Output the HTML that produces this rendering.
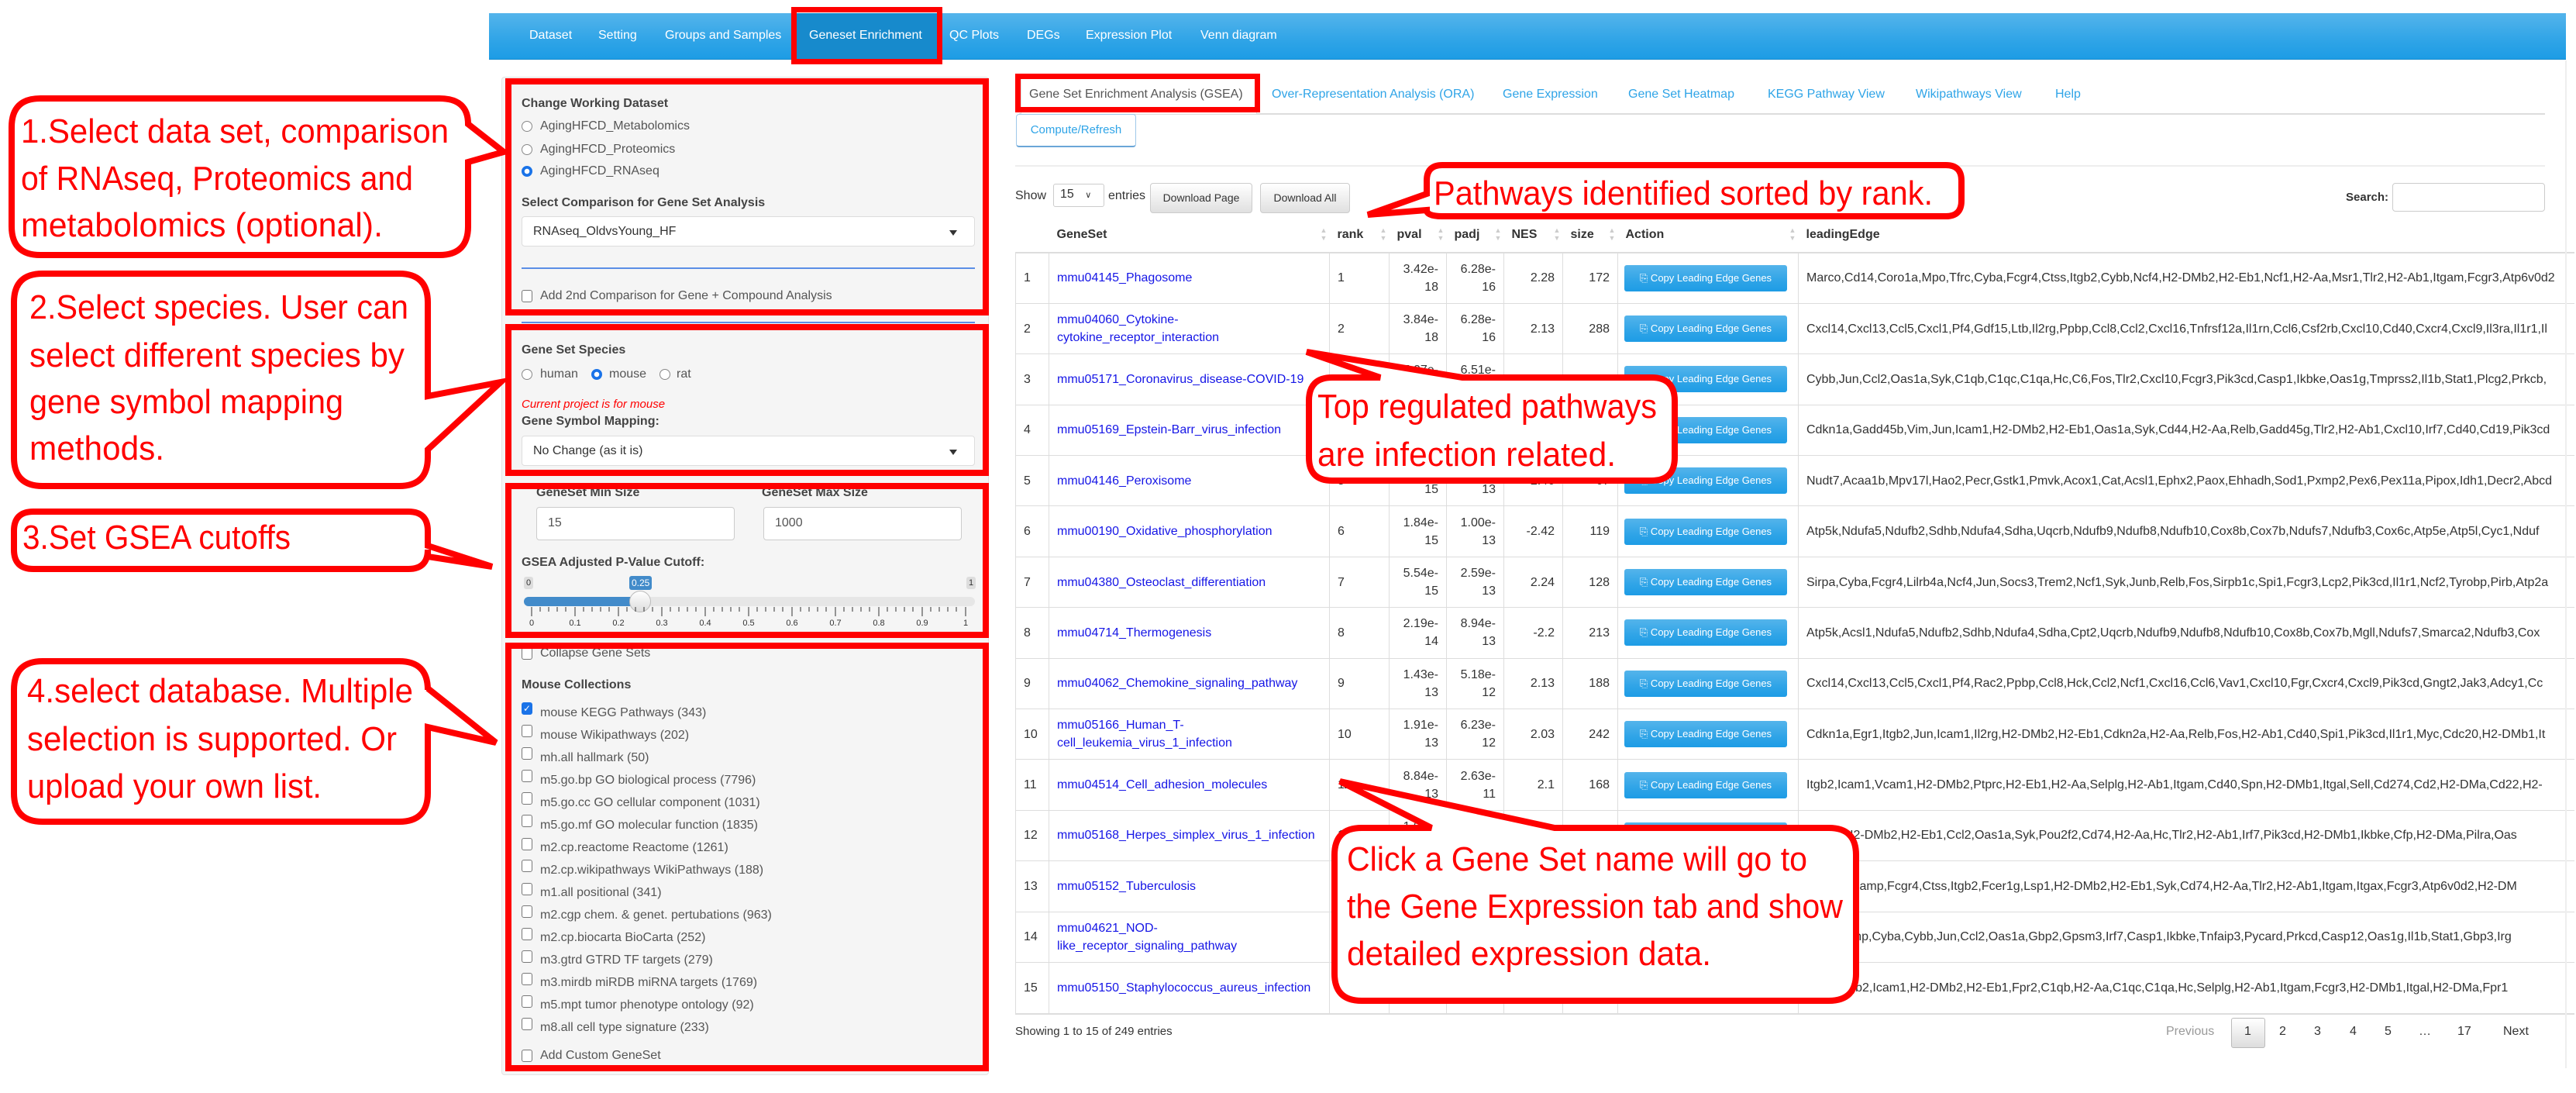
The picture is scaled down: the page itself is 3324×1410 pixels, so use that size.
<!DOCTYPE html>
<html><head><meta charset="utf-8">
<style>
*{box-sizing:border-box;margin:0;padding:0}
body{width:3324px;height:1410px;background:#fff;position:relative;overflow:hidden;font-family:"Liberation Sans",Arial,sans-serif;color:#555;font-size:16px}
.a{position:absolute;white-space:nowrap}
.nav{position:absolute;left:631px;top:17px;width:2680px;height:60px;background:linear-gradient(#54b4eb,#2fa4e7 60%,#1d9ce5);border-bottom:1px solid #178acc}
.nav span{position:absolute;top:20px;color:#fff;font-size:16px}
.act{position:absolute;left:1026px;top:17px;width:183px;height:60px;background:#178acc}
.side{position:absolute;left:647px;top:99px;width:629px;height:1288px;background:#f5f5f5;border:1px solid #e3e3e3;border-radius:4px}
.lbl{font-weight:bold;color:#444;font-size:16px}
.rad{position:absolute;width:14px;height:14px;border:1px solid #888;border-radius:50%;background:#fff}
.rad.on{border:1px solid #1a73e8;background:radial-gradient(#fff 0 3px,#1a73e8 3.5px)}
.chk{position:absolute;width:14px;height:16px;border:1px solid #777;border-radius:3px;background:#fff}
.sel{position:absolute;background:#fff;border:1px solid #ddd;border-radius:4px;font-size:16px;color:#333;padding:10px 14px}
.sel:after{content:"";position:absolute;right:22px;top:17px;border:5px solid transparent;border-top:7px solid #333}
.inp{position:absolute;background:#fff;border:1px solid #ccc;border-radius:4px;font-size:16px;color:#555;padding:11px 14px}
.tab{position:absolute;top:113px;color:#2fa4e7;font-size:16px}
.btn{position:absolute;background:linear-gradient(#fff,#e0e0e0);border:1px solid #ccc;border-radius:4px;font-size:14px;color:#333;text-align:center}
table{border-collapse:collapse;table-layout:fixed;font-size:16px;color:#333}
td,th{padding:0 10px;overflow:hidden;white-space:nowrap;line-height:23px}
th{text-align:left;height:46px;border-bottom:2px solid #ddd;font-weight:bold;position:relative}
th .s{position:absolute;right:4px;top:12px;width:8px;height:22px;color:#ccc;font-size:9px;line-height:10px}
td{border-top:1px solid #ddd;border-left:1px solid #ddd}
tbody tr{height:65.4px}
td.r{text-align:right}
td a{color:#1515e6;text-decoration:none}
.cb{display:inline-block;width:210px;height:34px;line-height:34px;border-radius:3px;background:linear-gradient(#54b4eb,#2fa4e7 60%,#1d9ce5);color:#fff;font-size:13px;text-align:center;margin-left:-2px}
.pg{position:absolute;top:1322px;font-size:16px;color:#333}
</style></head><body>

<div class="nav"></div>
<div class="act"></div>
<div class="nav" style="background:none;border:none">
<span style="left:52px">Dataset</span><span style="left:141px">Setting</span><span style="left:227px">Groups and Samples</span><span style="left:413px">Geneset Enrichment</span><span style="left:594px">QC Plots</span><span style="left:694px">DEGs</span><span style="left:770px">Expression Plot</span><span style="left:918px">Venn diagram</span>
</div>
<div class="a" style="left:1021px;top:9px;width:195px;height:74px;border:7px solid #f00"></div>

<!-- sidebar -->
<div class="side"></div>
<div class="a lbl" style="left:673px;top:125px">Change Working Dataset</div>
<div class="rad" style="left:673px;top:156px"></div><div class="a" style="left:697px;top:154px">AgingHFCD_Metabolomics</div>
<div class="rad" style="left:673px;top:186px"></div><div class="a" style="left:697px;top:184px">AgingHFCD_Proteomics</div>
<div class="rad on" style="left:673px;top:214px"></div><div class="a" style="left:697px;top:212px">AgingHFCD_RNAseq</div>
<div class="a lbl" style="left:673px;top:253px">Select Comparison for Gene Set Analysis</div>
<div class="sel" style="left:673px;top:279px;width:585px;height:39px">RNAseq_OldvsYoung_HF</div>
<div class="a" style="left:673px;top:345px;width:585px;height:2px;background:#5b8ee6"></div>
<div class="chk" style="left:673px;top:374px"></div><div class="a" style="left:697px;top:373px">Add 2nd Comparison for Gene + Compound Analysis</div>
<div class="a" style="left:673px;top:415px;width:585px;height:2px;background:#5b8ee6"></div>
<div class="a lbl" style="left:673px;top:443px">Gene Set Species</div>
<div class="rad" style="left:673px;top:476px"></div><div class="a" style="left:697px;top:474px">human</div>
<div class="rad on" style="left:763px;top:476px"></div><div class="a" style="left:786px;top:474px">mouse</div>
<div class="rad" style="left:851px;top:476px"></div><div class="a" style="left:873px;top:474px">rat</div>
<div class="a" style="left:673px;top:513px;color:#f00;font-style:italic;font-size:15px">Current project is for mouse</div>
<div class="a lbl" style="left:673px;top:535px">Gene Symbol Mapping:</div>
<div class="sel" style="left:673px;top:562px;width:585px;height:39px">No Change (as it is)</div>
<div class="a lbl" style="left:692px;top:627px">GeneSet Min Size</div>
<div class="a lbl" style="left:983px;top:627px">GeneSet Max Size</div>
<div class="inp" style="left:692px;top:654px;width:256px;height:43px">15</div>
<div class="inp" style="left:985px;top:654px;width:256px;height:43px">1000</div>
<div class="a lbl" style="left:673px;top:717px">GSEA Adjusted P-Value Cutoff:</div>
<div class="a" style="left:676px;top:744px;background:#ddd;color:#333;font-size:11px;padding:2px 3px;border-radius:3px">0</div>
<div class="a" style="left:812px;top:743px;background:#428bca;color:#fff;font-size:12px;padding:2px 3px;border-radius:3px">0.25</div>
<div class="a" style="left:1247px;top:744px;background:#ddd;color:#333;font-size:11px;padding:2px 3px;border-radius:3px">1</div>
<div class="a" style="left:676px;top:770px;width:582px;height:12px;background:#e6e6e6;border-radius:6px"></div>
<div class="a" style="left:676px;top:770px;width:150px;height:12px;background:#428bca;border-radius:6px 0 0 6px"></div>
<div class="a" style="left:812px;top:762px;width:28px;height:28px;border-radius:50%;background:linear-gradient(#fff,#ddd);border:1px solid #bbb"></div>
<svg class="a" style="left:676px;top:783px" width="590" height="40">
<g stroke="#333" stroke-width="1">
<path d="M10 0v12M66 0v12M122 0v12M178 0v12M234 0v12M290 0v12M346 0v12M402 0v12M458 0v12M514 0v12M570 0v12"/>
<path d="M21 0v6M32 0v6M43 0v6M54 0v6M77 0v6M88 0v6M99 0v6M110 0v6M133 0v6M144 0v6M155 0v6M166 0v6M189 0v6M200 0v6M211 0v6M222 0v6M245 0v6M256 0v6M267 0v6M278 0v6M301 0v6M312 0v6M323 0v6M334 0v6M357 0v6M368 0v6M379 0v6M390 0v6M413 0v6M424 0v6M435 0v6M446 0v6M469 0v6M480 0v6M491 0v6M502 0v6M525 0v6M536 0v6M547 0v6M558 0v6"/>
</g>
<g font-size="11" fill="#333" text-anchor="middle" font-family="Liberation Sans"><text x="10" y="24">0</text><text x="66" y="24">0.1</text><text x="122" y="24">0.2</text><text x="178" y="24">0.3</text><text x="234" y="24">0.4</text><text x="290" y="24">0.5</text><text x="346" y="24">0.6</text><text x="402" y="24">0.7</text><text x="458" y="24">0.8</text><text x="514" y="24">0.9</text><text x="570" y="24">1</text></g>
</svg>
<div class="chk" style="left:673px;top:835px"></div><div class="a" style="left:697px;top:834px">Collapse Gene Sets</div>
<div class="a lbl" style="left:673px;top:875px">Mouse Collections</div>
<div class="chk" style="left:673px;top:906px;background:#1a73e8;border-color:#1a73e8;color:#fff;font-size:12px;line-height:14px;text-align:center">✓</div>
<div class="a" style="left:697px;top:905px;line-height:29px">mouse KEGG Pathways (343)<br>mouse Wikipathways (202)<br>mh.all hallmark (50)<br>m5.go.bp GO biological process (7796)<br>m5.go.cc GO cellular component (1031)<br>m5.go.mf GO molecular function (1835)<br>m2.cp.reactome Reactome (1261)<br>m2.cp.wikipathways WikiPathways (188)<br>m1.all positional (341)<br>m2.cgp chem. &amp; genet. pertubations (963)<br>m2.cp.biocarta BioCarta (252)<br>m3.gtrd GTRD TF targets (279)<br>m3.mirdb miRDB miRNA targets (1769)<br>m5.mpt tumor phenotype ontology (92)<br>m8.all cell type signature (233)</div>
<div class="chk" style="left:673px;top:935px"></div><div class="chk" style="left:673px;top:964px"></div><div class="chk" style="left:673px;top:993px"></div><div class="chk" style="left:673px;top:1022px"></div><div class="chk" style="left:673px;top:1051px"></div><div class="chk" style="left:673px;top:1081px"></div><div class="chk" style="left:673px;top:1109px"></div><div class="chk" style="left:673px;top:1139px"></div><div class="chk" style="left:673px;top:1168px"></div><div class="chk" style="left:673px;top:1197px"></div><div class="chk" style="left:673px;top:1226px"></div><div class="chk" style="left:673px;top:1255px"></div><div class="chk" style="left:673px;top:1284px"></div><div class="chk" style="left:673px;top:1313px"></div>
<div class="chk" style="left:673px;top:1354px"></div><div class="a" style="left:697px;top:1353px">Add Custom GeneSet</div>

<!-- sidebar red boxes -->
<div class="a" style="left:652px;top:101px;width:624px;height:306px;border:8px solid #f00"></div>
<div class="a" style="left:652px;top:418px;width:624px;height:196px;border:8px solid #f00"></div>
<div class="a" style="left:652px;top:623px;width:624px;height:200px;border:8px solid #f00"></div>
<div class="a" style="left:652px;top:829px;width:624px;height:553px;border:8px solid #f00"></div>

<!-- main tabs -->
<div class="a" style="left:1315px;top:146px;width:1969px;height:2px;background:#ddd"></div>
<div class="a" style="left:1317px;top:100px;width:305px;height:47px;background:#fff;border:1px solid #ddd;border-bottom:none"></div>
<div class="tab" style="left:1328px;color:#555">Gene Set Enrichment Analysis (GSEA)</div>
<div class="tab" style="left:1641px">Over-Representation Analysis (ORA)</div>
<div class="tab" style="left:1939px">Gene Expression</div>
<div class="tab" style="left:2101px">Gene Set Heatmap</div>
<div class="tab" style="left:2281px">KEGG Pathway View</div>
<div class="tab" style="left:2472px">Wikipathways View</div>
<div class="tab" style="left:2652px">Help</div>
<div class="a" style="left:1310px;top:95px;width:316px;height:50px;border:7px solid #f00"></div>
<div class="a" style="left:1311px;top:147px;width:155px;height:43px;border:1px solid #9fc8ea;border-bottom:2px solid #6aa6d8;border-radius:4px;color:#2fa4e7;font-size:15px;line-height:40px;text-align:center">Compute/Refresh</div>
<div class="a" style="left:1310px;top:213px;width:1974px;height:2px;background:#eee"></div>

<div class="a" style="left:1310px;top:244px;font-size:16px;color:#333">Show</div>
<div class="a" style="left:1359px;top:237px;width:66px;height:30px;border:1px solid #ccc;border-radius:3px;background:#fff;font-size:16px;color:#333;padding:4px 8px">15 <span style="font-size:11px;margin-left:10px">∨</span></div>
<div class="a" style="left:1430px;top:244px;font-size:16px;color:#333">entries</div>
<div class="btn" style="left:1484px;top:236px;width:132px;height:39px;line-height:37px">Download Page</div>
<div class="btn" style="left:1626px;top:236px;width:116px;height:39px;line-height:37px">Download All</div>
<div class="a" style="left:3027px;top:246px;font-size:15px;font-weight:bold;color:#333">Search:</div>
<div class="a" style="left:3087px;top:236px;width:197px;height:37px;border:1px solid #ccc;border-radius:4px;background:#fff"></div>

<div class="a" style="left:1310px;top:280px;width:2012px;height:1040px;overflow:hidden">
<table style="width:2400px">
<colgroup><col style="width:43px"><col style="width:362px"><col style="width:77px"><col style="width:74px"><col style="width:74px"><col style="width:76px"><col style="width:71px"><col style="width:233px"><col style="width:1390px"></colgroup>
<thead><tr><th></th><th>GeneSet<span class="s">▲<br>▼</span></th><th>rank<span class="s">▲<br>▼</span></th><th>pval<span class="s">▲<br>▼</span></th><th>padj<span class="s">▲<br>▼</span></th><th>NES<span class="s">▲<br>▼</span></th><th>size<span class="s">▲<br>▼</span></th><th>Action<span class="s">▲<br>▼</span></th><th>leadingEdge</th></tr></thead>
<tbody>
<tr><td>1</td><td><a>mmu04145_Phagosome</a></td><td>1</td><td class="r">3.42e-<br>18</td><td class="r">6.28e-<br>16</td><td class="r">2.28</td><td class="r">172</td><td><span class="cb">⎘ Copy Leading Edge Genes</span></td><td>Marco,Cd14,Coro1a,Mpo,Tfrc,Cyba,Fcgr4,Ctss,Itgb2,Cybb,Ncf4,H2-DMb2,H2-Eb1,Ncf1,H2-Aa,Msr1,Tlr2,H2-Ab1,Itgam,Fcgr3,Atp6v0d2</td></tr>
<tr><td>2</td><td><a>mmu04060_Cytokine-<br>cytokine_receptor_interaction</a></td><td>2</td><td class="r">3.84e-<br>18</td><td class="r">6.28e-<br>16</td><td class="r">2.13</td><td class="r">288</td><td><span class="cb">⎘ Copy Leading Edge Genes</span></td><td>Cxcl14,Cxcl13,Ccl5,Cxcl1,Pf4,Gdf15,Ltb,Il2rg,Ppbp,Ccl8,Ccl2,Cxcl16,Tnfrsf12a,Il1rn,Ccl6,Csf2rb,Cxcl10,Cd40,Cxcr4,Cxcl9,Il3ra,Il1r1,Il</td></tr>
<tr><td>3</td><td><a>mmu05171_Coronavirus_disease-COVID-19</a></td><td>3</td><td class="r">5.07e-<br>17</td><td class="r">6.51e-<br>15</td><td class="r">2.01</td><td class="r">228</td><td><span class="cb">⎘ Copy Leading Edge Genes</span></td><td>Cybb,Jun,Ccl2,Oas1a,Syk,C1qb,C1qc,C1qa,Hc,C6,Fos,Tlr2,Cxcl10,Fcgr3,Pik3cd,Casp1,Ikbke,Oas1g,Tmprss2,Il1b,Stat1,Plcg2,Prkcb,</td></tr>
<tr><td>4</td><td><a>mmu05169_Epstein-Barr_virus_infection</a></td><td>4</td><td class="r">2.17e-<br>16</td><td class="r">2.09e-<br>14</td><td class="r">2.02</td><td class="r">222</td><td><span class="cb">⎘ Copy Leading Edge Genes</span></td><td>Cdkn1a,Gadd45b,Vim,Jun,Icam1,H2-DMb2,H2-Eb1,Oas1a,Syk,Cd44,H2-Aa,Relb,Gadd45g,Tlr2,H2-Ab1,Cxcl10,Irf7,Cd40,Cd19,Pik3cd</td></tr>
<tr><td>5</td><td><a>mmu04146_Peroxisome</a></td><td>5</td><td class="r">1.06e-<br>15</td><td class="r">8.17e-<br>13</td><td class="r">-2.46</td><td class="r">67</td><td><span class="cb">⎘ Copy Leading Edge Genes</span></td><td>Nudt7,Acaa1b,Mpv17l,Hao2,Pecr,Gstk1,Pmvk,Acox1,Cat,Acsl1,Ephx2,Paox,Ehhadh,Sod1,Pxmp2,Pex6,Pex11a,Pipox,Idh1,Decr2,Abcd</td></tr>
<tr><td>6</td><td><a>mmu00190_Oxidative_phosphorylation</a></td><td>6</td><td class="r">1.84e-<br>15</td><td class="r">1.00e-<br>13</td><td class="r">-2.42</td><td class="r">119</td><td><span class="cb">⎘ Copy Leading Edge Genes</span></td><td>Atp5k,Ndufa5,Ndufb2,Sdhb,Ndufa4,Sdha,Uqcrb,Ndufb9,Ndufb8,Ndufb10,Cox8b,Cox7b,Ndufs7,Ndufb3,Cox6c,Atp5e,Atp5l,Cyc1,Nduf</td></tr>
<tr><td>7</td><td><a>mmu04380_Osteoclast_differentiation</a></td><td>7</td><td class="r">5.54e-<br>15</td><td class="r">2.59e-<br>13</td><td class="r">2.24</td><td class="r">128</td><td><span class="cb">⎘ Copy Leading Edge Genes</span></td><td>Sirpa,Cyba,Fcgr4,Lilrb4a,Ncf4,Jun,Socs3,Trem2,Ncf1,Syk,Junb,Relb,Fos,Sirpb1c,Spi1,Fcgr3,Lcp2,Pik3cd,Il1r1,Ncf2,Tyrobp,Pirb,Atp2a</td></tr>
<tr><td>8</td><td><a>mmu04714_Thermogenesis</a></td><td>8</td><td class="r">2.19e-<br>14</td><td class="r">8.94e-<br>13</td><td class="r">-2.2</td><td class="r">213</td><td><span class="cb">⎘ Copy Leading Edge Genes</span></td><td>Atp5k,Acsl1,Ndufa5,Ndufb2,Sdhb,Ndufa4,Sdha,Cpt2,Uqcrb,Ndufb9,Ndufb8,Ndufb10,Cox8b,Cox7b,Mgll,Ndufs7,Smarca2,Ndufb3,Cox</td></tr>
<tr><td>9</td><td><a>mmu04062_Chemokine_signaling_pathway</a></td><td>9</td><td class="r">1.43e-<br>13</td><td class="r">5.18e-<br>12</td><td class="r">2.13</td><td class="r">188</td><td><span class="cb">⎘ Copy Leading Edge Genes</span></td><td>Cxcl14,Cxcl13,Ccl5,Cxcl1,Pf4,Rac2,Ppbp,Ccl8,Hck,Ccl2,Ncf1,Cxcl16,Ccl6,Vav1,Cxcl10,Fgr,Cxcr4,Cxcl9,Pik3cd,Gngt2,Jak3,Adcy1,Cc</td></tr>
<tr><td>10</td><td><a>mmu05166_Human_T-<br>cell_leukemia_virus_1_infection</a></td><td>10</td><td class="r">1.91e-<br>13</td><td class="r">6.23e-<br>12</td><td class="r">2.03</td><td class="r">242</td><td><span class="cb">⎘ Copy Leading Edge Genes</span></td><td>Cdkn1a,Egr1,Itgb2,Jun,Icam1,Il2rg,H2-DMb2,H2-Eb1,Cdkn2a,H2-Aa,Relb,Fos,H2-Ab1,Cd40,Spi1,Pik3cd,Il1r1,Myc,Cdc20,H2-DMb1,It</td></tr>
<tr><td>11</td><td><a>mmu04514_Cell_adhesion_molecules</a></td><td>11</td><td class="r">8.84e-<br>13</td><td class="r">2.63e-<br>11</td><td class="r">2.1</td><td class="r">168</td><td><span class="cb">⎘ Copy Leading Edge Genes</span></td><td>Itgb2,Icam1,Vcam1,H2-DMb2,Ptprc,H2-Eb1,H2-Aa,Selplg,H2-Ab1,Itgam,Cd40,Spn,H2-DMb1,Itgal,Sell,Cd274,Cd2,H2-DMa,Cd22,H2-</td></tr>
<tr><td>12</td><td><a>mmu05168_Herpes_simplex_virus_1_infection</a></td><td>12</td><td class="r">1.01e-<br>12</td><td class="r">2.75e-<br>11</td><td class="r">1.98</td><td class="r">371</td><td><span class="cb">⎘ Copy Leading Edge Genes</span></td><td>Socs3,H2-DMb2,H2-Eb1,Ccl2,Oas1a,Syk,Pou2f2,Cd74,H2-Aa,Hc,Tlr2,H2-Ab1,Irf7,Pik3cd,H2-DMb1,Ikbke,Cfp,H2-DMa,Pilra,Oas</td></tr>
<tr><td>13</td><td><a>mmu05152_Tuberculosis</a></td><td>13</td><td class="r">1.48e-<br>12</td><td class="r">3.72e-<br>11</td><td class="r">2.05</td><td class="r">170</td><td><span class="cb">⎘ Copy Leading Edge Genes</span></td><td>Coro1a,Camp,Fcgr4,Ctss,Itgb2,Fcer1g,Lsp1,H2-DMb2,H2-Eb1,Syk,Cd74,H2-Aa,Tlr2,H2-Ab1,Itgam,Itgax,Fcgr3,Atp6v0d2,H2-DM</td></tr>
<tr><td>14</td><td><a>mmu04621_NOD-<br>like_receptor_signaling_pathway</a></td><td>14</td><td class="r">2.77e-<br>12</td><td class="r">6.40e-<br>11</td><td class="r">2.02</td><td class="r">184</td><td><span class="cb">⎘ Copy Leading Edge Genes</span></td><td>Ncf1,Camp,Cyba,Cybb,Jun,Ccl2,Oas1a,Gbp2,Gpsm3,Irf7,Casp1,Ikbke,Tnfaip3,Pycard,Prkcd,Casp12,Oas1g,Il1b,Stat1,Gbp3,Irg</td></tr>
<tr><td>15</td><td><a>mmu05150_Staphylococcus_aureus_infection</a></td><td>15</td><td class="r">4.02e-<br>12</td><td class="r">8.61e-<br>11</td><td class="r">2.12</td><td class="r">83</td><td><span class="cb">⎘ Copy Leading Edge Genes</span></td><td>Fcgr4,Itgb2,Icam1,H2-DMb2,H2-Eb1,Fpr2,C1qb,H2-Aa,C1qc,C1qa,Hc,Selplg,H2-Ab1,Itgam,Fcgr3,H2-DMb1,Itgal,H2-DMa,Fpr1</td></tr>
</tbody></table>
<div style="position:absolute;left:0;top:1027px;width:2012px;height:2px;background:#ddd"></div>
</div>

<div class="pg" style="left:1310px;font-size:15px">Showing 1 to 15 of 249 entries</div>
<div class="pg" style="left:2795px;color:#999">Previous</div>
<div class="a" style="left:2879px;top:1313px;width:44px;height:39px;border:1px solid #bbb;border-radius:3px;background:linear-gradient(#fff,#ddd)"></div>
<div class="pg" style="left:2896px">1</div><div class="pg" style="left:2941px">2</div><div class="pg" style="left:2986px">3</div><div class="pg" style="left:3032px">4</div><div class="pg" style="left:3077px">5</div><div class="pg" style="left:3121px">…</div><div class="pg" style="left:3171px">17</div><div class="pg" style="left:3230px">Next</div>
<div class="a" style="left:3310px;top:78px;width:2px;height:1300px;background:#eee"></div>

<!-- callouts -->
<svg class="a" style="left:0;top:0" width="3324" height="1410" font-family="Liberation Sans, Arial, sans-serif">
<g fill="#fff" stroke="#f00" stroke-width="8" stroke-linejoin="miter">
<path d="M52,127 H567 Q604,127 604,160 L650,196 L604,209 V292 Q604,329 567,329 H52 Q15,329 15,292 V164 Q15,127 52,127 Z"/>
<path d="M55,353 H515 Q552,353 552,390 V511 L646,493 L552,580 V590 Q552,627 515,627 H55 Q18,627 18,590 V390 Q18,353 55,353 Z"/>
<path d="M43,660 H527 Q552,660 552,685 V704 L635,731 L552,718 V709 Q552,734 527,734 H43 Q18,734 18,709 V685 Q18,660 43,660 Z"/>
<path d="M55,853 H515 Q552,853 552,890 V888 L640,958 L552,938 V1023 Q552,1060 515,1060 H55 Q18,1060 18,1023 V890 Q18,853 55,853 Z"/>
<path d="M1861,213 H2511 Q2531,213 2531,233 V259 Q2531,279 2511,279 H1861 Q1841,279 1841,271 L1765,277 L1841,250 V233 Q1841,213 1861,213 Z"/>
<path d="M1719,487 H1781 L1686,454 L1887,487 H2131 Q2161,487 2161,517 V590 Q2161,620 2131,620 H1719 Q1689,620 1689,590 V517 Q1689,487 1719,487 Z"/>
<path d="M1757,1068 H1847 L1729,1008 L2006,1068 H2360 Q2395,1068 2395,1103 V1256 Q2395,1291 2360,1291 H1757 Q1722,1291 1722,1256 V1103 Q1722,1068 1757,1068 Z"/>
</g>
<g fill="#f00" font-size="44" lengthAdjust="spacingAndGlyphs">
<text x="27" y="184" textLength="552" lengthAdjust="spacingAndGlyphs">1.Select data set, comparison</text>
<text x="27" y="245" textLength="506" lengthAdjust="spacingAndGlyphs">of RNAseq, Proteomics and</text>
<text x="27" y="305" textLength="467" lengthAdjust="spacingAndGlyphs">metabolomics (optional).</text>
<text x="38" y="411" textLength="489" lengthAdjust="spacingAndGlyphs">2.Select species. User can</text>
<text x="38" y="473" textLength="484" lengthAdjust="spacingAndGlyphs">select different species by</text>
<text x="38" y="533" textLength="405" lengthAdjust="spacingAndGlyphs">gene symbol mapping</text>
<text x="38" y="593" textLength="174" lengthAdjust="spacingAndGlyphs">methods.</text>
<text x="29" y="708" textLength="346" lengthAdjust="spacingAndGlyphs">3.Set GSEA cutoffs</text>
<text x="35" y="906" textLength="498" lengthAdjust="spacingAndGlyphs">4.select database. Multiple</text>
<text x="35" y="968" textLength="477" lengthAdjust="spacingAndGlyphs">selection is supported. Or</text>
<text x="35" y="1029" textLength="380" lengthAdjust="spacingAndGlyphs">upload your own list.</text>
<text x="1850" y="264" textLength="644" lengthAdjust="spacingAndGlyphs">Pathways identified sorted by rank.</text>
<text x="1700" y="539" textLength="438" lengthAdjust="spacingAndGlyphs">Top regulated pathways</text>
<text x="1700" y="601" textLength="385" lengthAdjust="spacingAndGlyphs">are infection related.</text>
<text x="1738" y="1123" textLength="594" lengthAdjust="spacingAndGlyphs">Click a Gene Set name will go to</text>
<text x="1738" y="1184" textLength="640" lengthAdjust="spacingAndGlyphs">the Gene Expression tab and show</text>
<text x="1738" y="1245" textLength="470" lengthAdjust="spacingAndGlyphs">detailed expression data.</text>
</g>
</svg>
</body></html>
